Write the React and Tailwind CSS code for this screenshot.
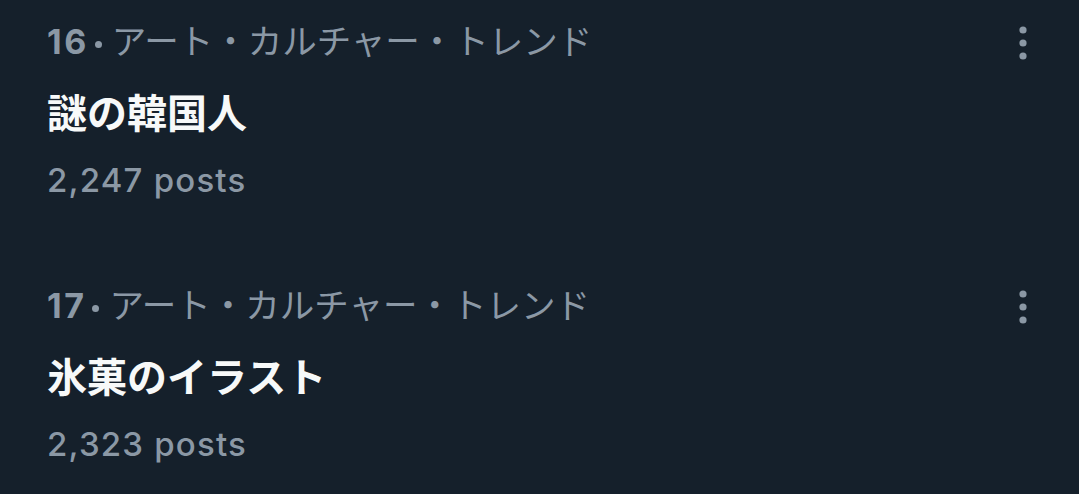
import React from 'react';

const trends = [
  { rank: 16, category: 'アート・カルチャー・トレンド', title: '謎の韓国人', posts: '2,247 posts' },
  { rank: 17, category: 'アート・カルチャー・トレンド', title: '氷菓のイラスト', posts: '2,323 posts' },
];

const MoreIcon = () => (
  <svg width="14" height="36" viewBox="0 0 14 36" className="mt-[7px] shrink-0" fill="#8b98a5">
    <circle cx="7" cy="5" r="3.6" />
    <circle cx="7" cy="18" r="3.6" />
    <circle cx="7" cy="31" r="3.6" />
  </svg>
);

const TrendRow = ({ rank, category, title, posts }) => (
  <div className="pl-[47px] pr-[49px] pt-[18px] pb-[60px]">
    <div className="flex items-start justify-between">
      <div className="flex items-center h-[48px] leading-[48px] text-[32px] text-[#8b98a5] whitespace-nowrap">
        <span className="font-bold text-[34px] tracking-[2.5px]">{rank}</span>
        <span className="ml-[6px] mr-[10px] w-[7px] h-[7px] rounded-full bg-[#8b98a5] translate-y-[2px]" />
        <span className="text-[34.5px]">{category}</span>
      </div>
      <MoreIcon />
    </div>
    {/* title */}
    <div className="mt-[20px] h-[56px] leading-[56px] text-[40px] font-bold text-[#f7f9f9] whitespace-nowrap">
      {title}
    </div>
    <div className="mt-[14px] h-[48px] leading-[48px] text-[33px] font-medium tracking-[1.2px] text-[#8b98a5] whitespace-nowrap">
      {posts}
    </div>
  </div>
);

export default function App() {
  return (
    <div
      className="w-[1079px] h-[494px] overflow-hidden bg-[#15202b]"
      style={{ fontFamily: 'Inter, "Noto Sans CJK JP", sans-serif' }}
    >
      {trends.map((t) => (
        <TrendRow key={t.rank} {...t} />
      ))}
    </div>
  );
}
